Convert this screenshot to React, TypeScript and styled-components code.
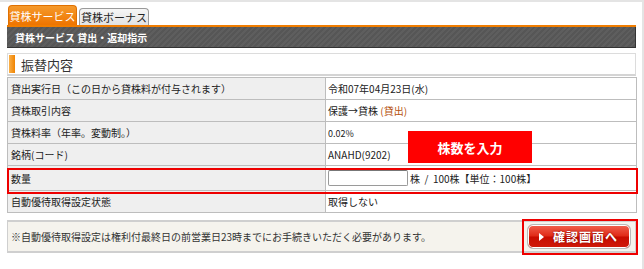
import React from "react";
import styled, { createGlobalStyle } from "styled-components";

const GlobalStyle = createGlobalStyle`
  html, body {
    margin: 0;
    padding: 0;
    background: #fff;
  }
  body {
    font-family: "Noto Sans CJK JP", "Noto Sans", sans-serif;
    color: #222;
  }
`;

interface Row {
  label: string;
  height: number;
  value: React.ReactNode;
}

// built at render time, the styled parts below are declared later in the file
function getRows(): Row[] {
  return [
    {
      label: "貸出実行日（この日から貸株料が付与されます）",
      height: 22,
      value: "令和07年04月23日(水)",
    },
    {
      label: "貸株取引内容",
      height: 22,
      value: (
        <>
          保護→貸株 <Accent>(貸出)</Accent>
        </>
      ),
    },
    { label: "貸株料率（年率。変動制。）", height: 22, value: <Small>0.02%</Small> },
    { label: "銘柄(コード)", height: 22, value: "ANAHD(9202)" },
    {
      label: "数量",
      height: 25,
      value: (
        <QtyWrap>
          <QtyInput type="text" />
          <span>株 &nbsp;/ &nbsp;100株【単位：100株】</span>
        </QtyWrap>
      ),
    },
    { label: "自動優待取得設定状態", height: 22, value: "取得しない" },
  ];
}

export default function App() {
  const rows = getRows();
  return (
    <Page>
      <GlobalStyle />
      <TabBar>
        <Tab $active>貸株サービス</Tab>
        <Tab>貸株ボーナス</Tab>
      </TabBar>
      <TitleBar>貸株サービス 貸出・返却指示</TitleBar>
      <SectionHead>
        <SectionMark />
        <span>振替内容</span>
      </SectionHead>
      <Table>
        <tbody>
          {rows.map((row) => (
            <tr key={row.label} style={{ height: row.height }}>
              <LabelCell>{row.label}</LabelCell>
              <ValueCell>{row.value}</ValueCell>
            </tr>
          ))}
        </tbody>
      </Table>
      <Notice>
        <span>※自動優待取得設定は権利付最終日の前営業日23時までにお手続きいただく必要があります。</span>
        <ConfirmButton type="button">
          <Arrow />
          確認画面へ
        </ConfirmButton>
      </Notice>

      <Callout>株数を入力</Callout>
      <Highlight $left={7} $top={166} $width={631} $height={26} />
      <Highlight $left={522} $top={217} $width={116} $height={36} />
    </Page>
  );
}

const Page = styled.div`
  position: relative;
  box-sizing: border-box;
  width: 644px;
  height: 269px;
  border-top: 2px solid #e4e4e4;
  border-right: 2px solid #e4e4e4;
  padding: 3px 6px 0 7px;
`;

const TabBar = styled.div`
  display: flex;
  align-items: flex-end;
  gap: 2px;
  height: 20px;
  padding-left: 1px;
  border-bottom: 2px solid #f07d00;
`;

const Tab = styled.div<{ $active?: boolean }>`
  box-sizing: border-box;
  display: flex;
  align-items: center;
  justify-content: center;
  font-size: 11px;
  border-radius: 4px 4px 0 0;
  width: ${(p) => (p.$active ? 69 : 70)}px;
  height: ${(p) => (p.$active ? 20 : 17)}px;
  color: ${(p) => (p.$active ? "#fff" : "#222")};
  background: ${(p) =>
    p.$active ? "linear-gradient(#f59a2c, #ee7400)" : "linear-gradient(#f6f6f6, #e2e2e2)"};
  border: 1px solid ${(p) => (p.$active ? "#e07000" : "#9a9a9a")};
  border-bottom: none;
`;

const TitleBar = styled.div`
  box-sizing: border-box;
  height: 21px;
  display: flex;
  align-items: center;
  padding-left: 8px;
  color: #fff;
  font-size: 10px;
  font-weight: bold;
  background: repeating-linear-gradient(
    135deg,
    #565656 0px,
    #565656 2px,
    #5e5e5e 2px,
    #5e5e5e 4px
  );
  border-right: 1px solid #333;
  border-bottom: 1px solid #333;
`;

const SectionHead = styled.div`
  box-sizing: border-box;
  margin-top: 5px;
  height: 23px;
  display: flex;
  align-items: center;
  gap: 6px;
  padding: 1px;
  border: 1px solid #dcdcdc;
  border-bottom: 2px solid #d4d4d4;
  font-size: 13px;
  color: #333;
`;

const SectionMark = styled.div`
  align-self: stretch;
  width: 6px;
  background: linear-gradient(90deg, #f9b04a, #f08300);
`;

const Table = styled.table`
  margin-top: 1px;
  width: 630px;
  border-collapse: collapse;
  font-size: 10px;
  border: 1px solid #b4b4b4;
`;

const LabelCell = styled.td`
  width: 311px;
  padding: 0 3px;
  background: #efefef;
  border: 1px solid #bdbdbd;
  color: #222;
`;

const ValueCell = styled.td`
  padding: 0 2px;
  background: #fff;
  border: 1px solid #bdbdbd;
  color: #222;
`;

const Accent = styled.span`
  color: #b5520f;
`;

const Small = styled.span`
  font-size: 9px;
`;

const QtyWrap = styled.div`
  display: flex;
  align-items: center;
  gap: 2px;
`;

const QtyInput = styled.input`
  box-sizing: border-box;
  width: 80px;
  height: 16px;
  padding: 0;
  border: 1px solid #9a9a9a;
  border-top-color: #777;
  border-radius: 2px;
`;

const Notice = styled.div`
  box-sizing: border-box;
  margin-top: 7px;
  width: 630px;
  height: 33px;
  display: flex;
  align-items: center;
  justify-content: space-between;
  padding: 0 4px 0 3px;
  background: #f5f3ed;
  border: 2px solid #cfcfcf;
  border-left-width: 1px;
  font-size: 10px;
  color: #333;
`;

const ConfirmButton = styled.button`
  box-sizing: border-box;
  width: 104px;
  height: 25px;
  display: flex;
  align-items: center;
  gap: 9px;
  padding: 0 0 0 11px;
  border: 1px solid #b8b8b8;
  border-radius: 6px;
  box-shadow: inset 0 0 0 1px #fff;
  background: linear-gradient(#f2624f 0%, #e02a17 48%, #c80d00 52%, #d01a0a 100%);
  color: #fff;
  font-family: inherit;
  font-size: 12px;
  font-weight: bold;
  letter-spacing: 1px;
  text-shadow: 0 0 2px #700;
  cursor: pointer;
`;

const Arrow = styled.span`
  width: 0;
  height: 0;
  border-top: 4px solid transparent;
  border-bottom: 4px solid transparent;
  border-left: 5px solid #fff;
`;

const Callout = styled.div`
  position: absolute;
  left: 408px;
  top: 129px;
  width: 124px;
  height: 32px;
  display: flex;
  align-items: center;
  justify-content: center;
  background: #ff0000;
  color: #fff;
  font-size: 13px;
  font-weight: bold;
`;

const Highlight = styled.div<{ $left: number; $top: number; $width: number; $height: number }>`
  position: absolute;
  box-sizing: border-box;
  left: ${(p) => p.$left}px;
  top: ${(p) => p.$top}px;
  width: ${(p) => p.$width}px;
  height: ${(p) => p.$height}px;
  border: 2px solid #ee0000;
  pointer-events: none;
`;
